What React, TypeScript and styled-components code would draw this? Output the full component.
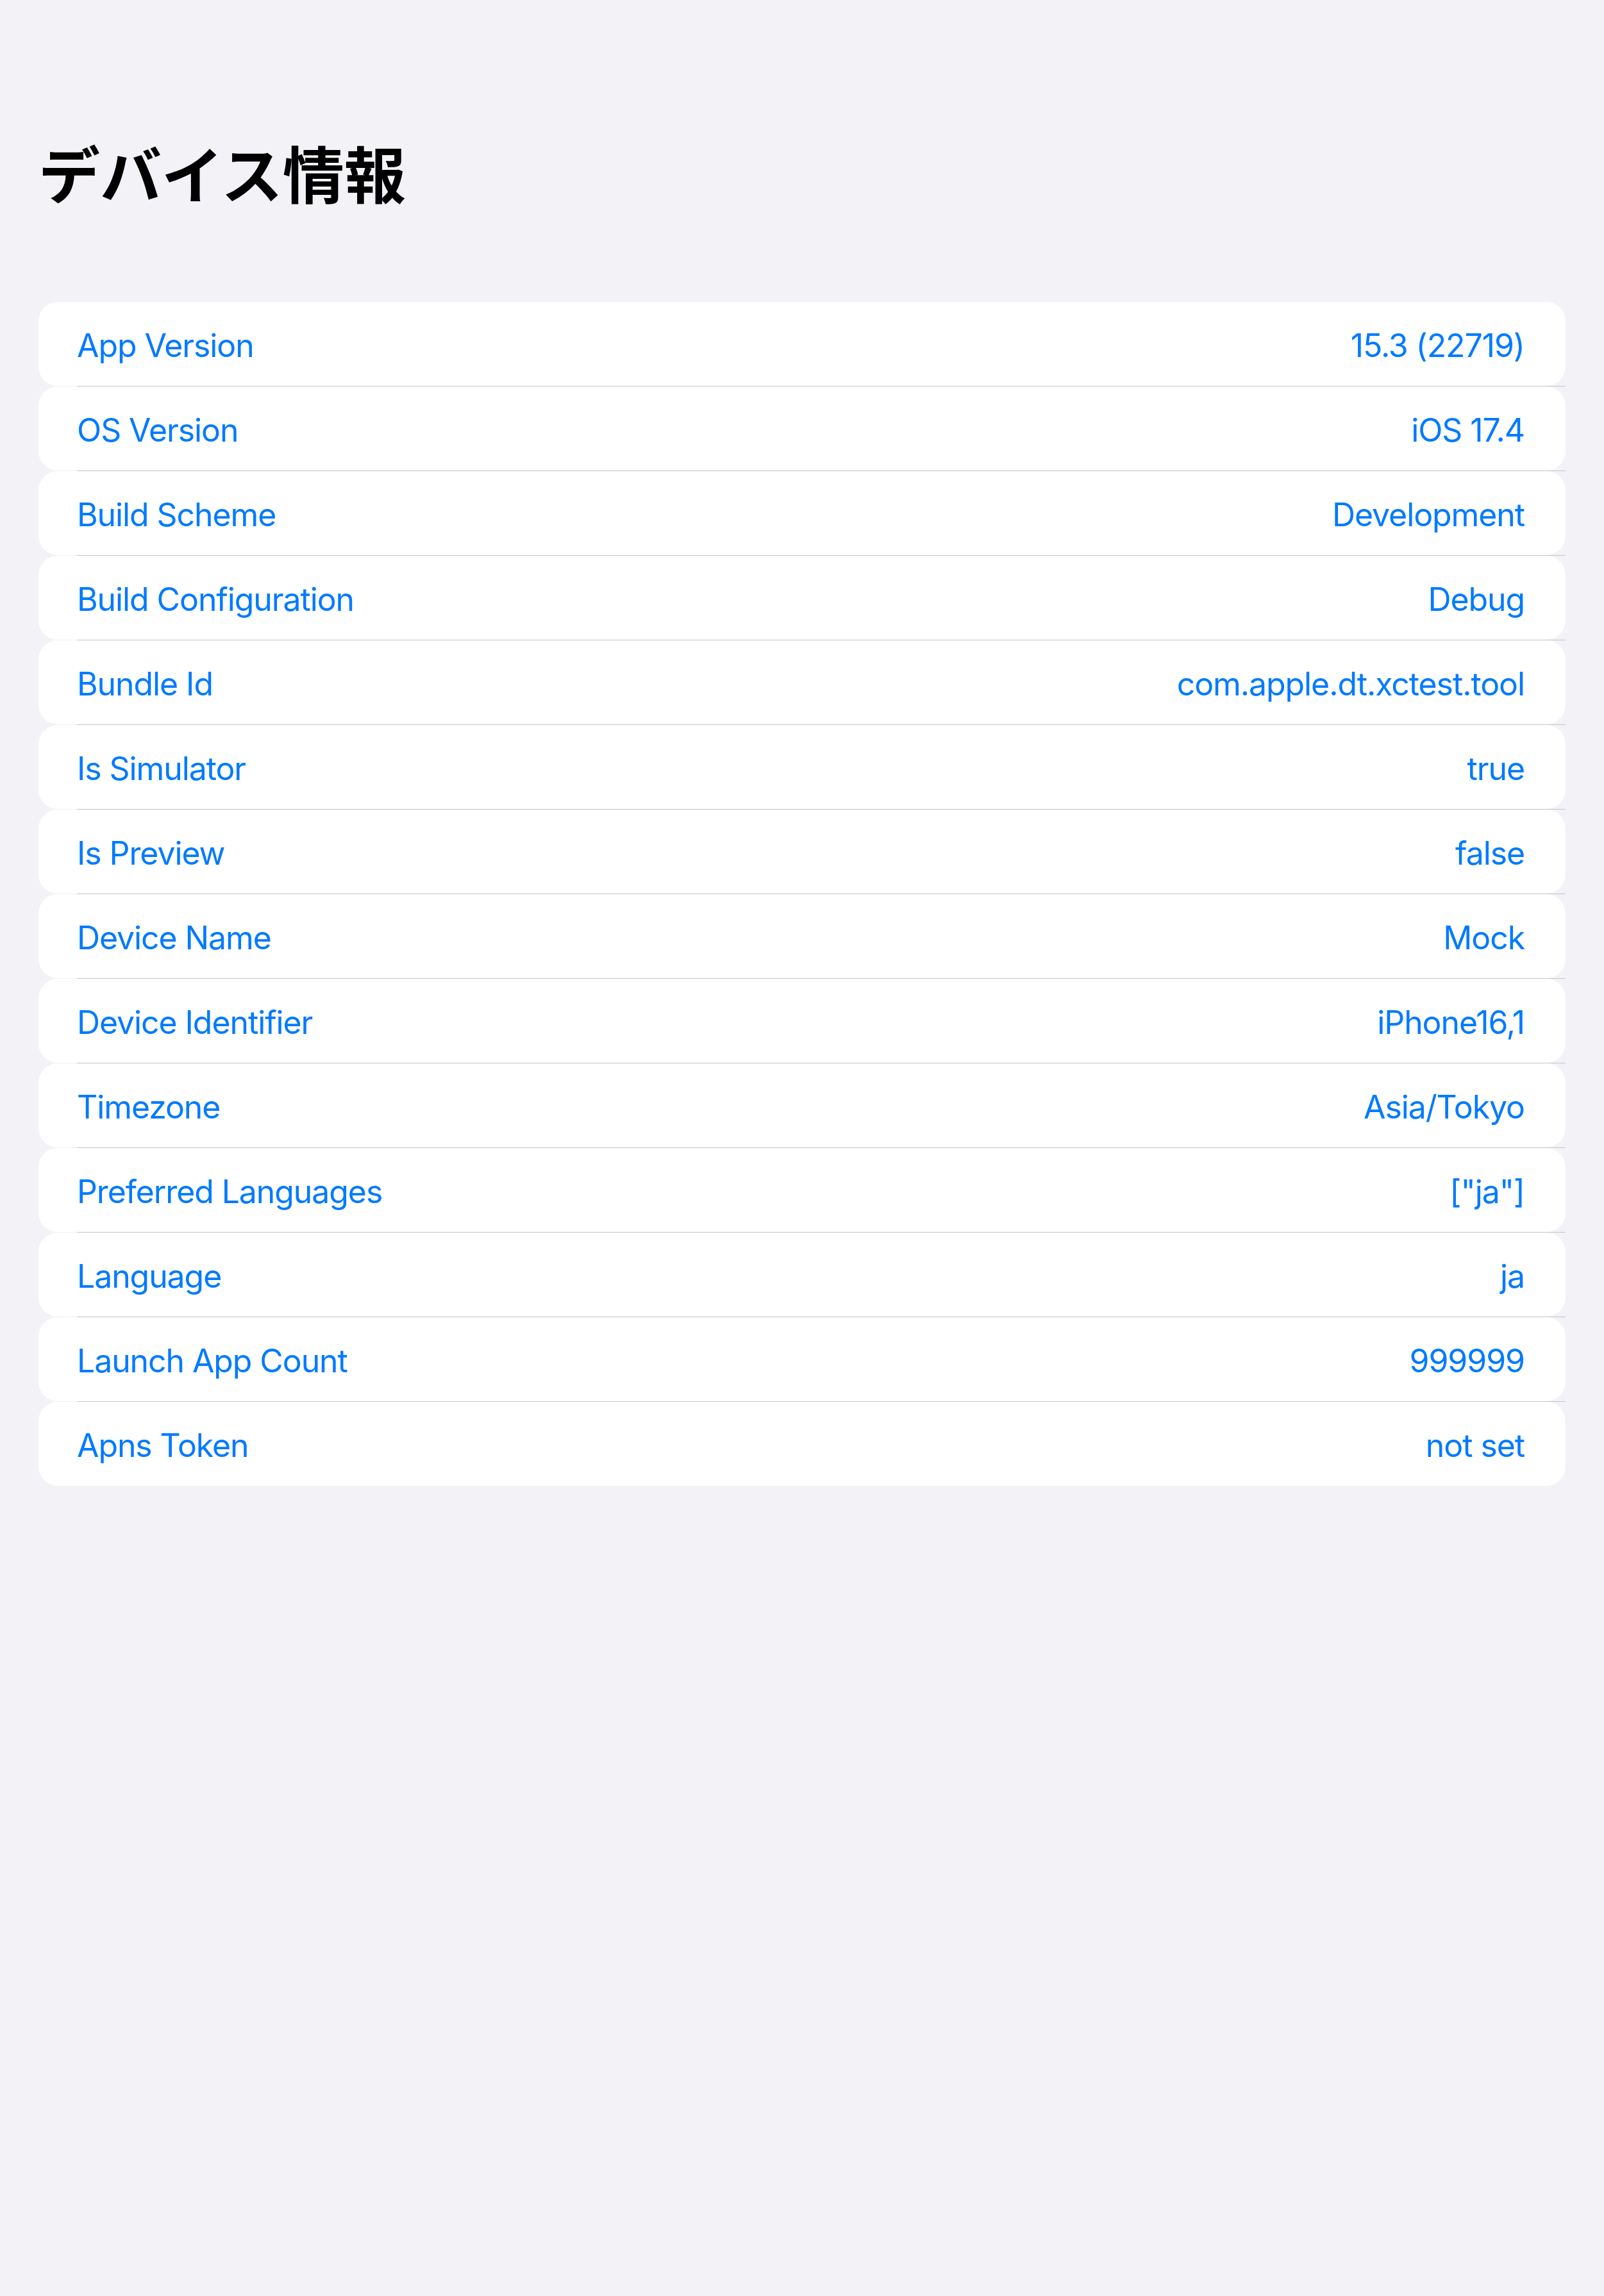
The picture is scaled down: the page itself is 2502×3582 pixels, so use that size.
import React from "react";
import styled, { createGlobalStyle } from "styled-components";

const GlobalStyle = createGlobalStyle`
  html, body {
    margin: 0;
    padding: 0;
    background: #f2f2f7;
  }
  body {
    font-family: Inter, "Noto Sans", "Noto Sans CJK JP", sans-serif;
    -webkit-font-smoothing: antialiased;
  }
`;

const Screen = styled.div`
  width: 2502px;
  min-height: 3582px;
  background: #f2f2f7;
  box-sizing: border-box;
  padding: 0 60px;
`;

const Title = styled.h1`
  margin: 0;
  padding-top: 208px;
  height: 471px;
  box-sizing: border-box;
  font-family: "Noto Sans CJK JP", "Noto Sans", sans-serif;
  font-weight: 700;
  font-size: 96px;
  line-height: 120px;
  color: #000000;
`;

const List = styled.div`
  display: flex;
  flex-direction: column;
`;

const Row = styled.div`
  display: flex;
  align-items: center;
  justify-content: space-between;
  height: 131px;
  padding: 4px 64px 0 60px;
  box-sizing: border-box;
  background: #ffffff;
  border-radius: 30px;
`;

const Separator = styled.div`
  height: 1px;
  margin-left: 60px;
  background: #c6c6c8;
`;

const Label = styled.span`
  font-family: Inter, "Noto Sans", sans-serif;
  font-size: 50px;
  letter-spacing: -1.1px;
  color: #007aff;
`;

const Value = styled(Label)`
  text-align: right;
`;

const items: [string, string][] = [
  ["App Version", "15.3 (22719)"],
  ["OS Version", "iOS 17.4"],
  ["Build Scheme", "Development"],
  ["Build Configuration", "Debug"],
  ["Bundle Id", "com.apple.dt.xctest.tool"],
  ["Is Simulator", "true"],
  ["Is Preview", "false"],
  ["Device Name", "Mock"],
  ["Device Identifier", "iPhone16,1"],
  ["Timezone", "Asia/Tokyo"],
  ["Preferred Languages", '["ja"]'],
  ["Language", "ja"],
  ["Launch App Count", "999999"],
  ["Apns Token", "not set"],
];

export default function App() {
  return (
    <>
      <GlobalStyle />
      <Screen>
        <Title>デバイス情報</Title>
        <List>
          {items.map(([label, value], i) => (
            <React.Fragment key={label}>
              {i > 0 && <Separator />}
              <Row>
                <Label>{label}</Label>
                <Value>{value}</Value>
              </Row>
            </React.Fragment>
          ))}
        </List>
      </Screen>
    </>
  );
}
